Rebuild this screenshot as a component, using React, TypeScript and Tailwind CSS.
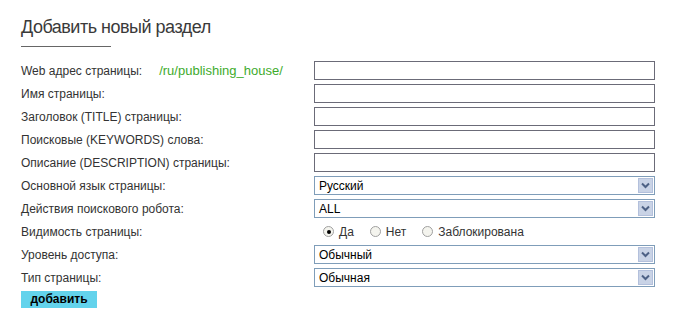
import React from "react";

const font = { fontFamily: '"Liberation Sans", Arial, sans-serif' };

const TextRow = ({ label, extra }: { label: string; extra?: React.ReactNode }) => (
  <div className="flex items-center h-[23px]">
    <div className="w-[293px] flex items-center">
      <span>{label}</span>
      {extra}
    </div>
    <input className="w-[341px] h-[19px] border border-[#6b6b78] bg-white outline-none" />
  </div>
);

const SelectRow = ({ label, value }: { label: string; value: string }) => (
  <div className="flex items-center h-[23px]">
    <div className="w-[293px]">{label}</div>
    <div className="w-[341px] h-[19px] border border-[#7f9db9] bg-white flex items-center justify-between pl-[4px] pr-[1px] text-black">
      <span>{value}</span>
      <span className="w-[15px] h-[15px] bg-[#c9d3e6] border border-[#b3c0dc] flex items-center justify-center">
        <svg width="9" height="7" viewBox="0 0 9 7">
          <path d="M1 1.5 L4.5 5 L8 1.5" stroke="#4d6185" strokeWidth="2" fill="none" />
        </svg>
      </span>
    </div>
  </div>
);

const Radio = ({ label, checked }: { label: string; checked?: boolean }) => (
  <label className="flex items-center gap-[5px] mr-[16px]">
    <span className="w-[11px] h-[11px] rounded-full border border-[#a0a0a0] bg-[#f4f4ee] flex items-center justify-center">
      {checked && <span className="w-[4px] h-[4px] rounded-full bg-black" />}
    </span>
    <span className="text-[#333]">{label}</span>
  </label>
);

export default function App() {
  return (
    <div className="bg-white w-[676px] h-[330px] pl-[21px] pt-[16px] text-[12px] text-[#333]" style={font}>
      <h1 className="text-[18px] leading-[23px] text-[#3a3a3a] tracking-[-0.5px]">Добавить новый раздел</h1>
      <div className="w-[90px] h-px bg-[#666] mt-[7px] mb-[12px]" />
      <div className="flex flex-col">
        <TextRow
          label="Web адрес страницы:"
          extra={<span className="ml-[17px] text-[13px] text-[#3eab2c]">/ru/publishing_house/</span>}
        />
        <TextRow label="Имя страницы:" />
        <TextRow label="Заголовок (TITLE) страницы:" />
        <TextRow label="Поисковые (KEYWORDS) слова:" />
        <TextRow label="Описание (DESCRIPTION) страницы:" />
        <SelectRow label="Основной язык страницы:" value="Русский" />
        <SelectRow label="Действия поискового робота:" value="ALL" />
        <div className="flex items-center h-[23px]">
          <div className="w-[302px]">Видимость страницы:</div>
          <Radio label="Да" checked />
          <Radio label="Нет" />
          <Radio label="Заблокирована" />
        </div>
        <SelectRow label="Уровень доступа:" value="Обычный" />
        <SelectRow label="Тип страницы:" value="Обычная" />
      </div>
      <button className="mt-[2px] w-[76px] h-[17px] bg-[#63d3ec] text-black font-bold text-[12px] leading-[17px]">
        добавить
      </button>
    </div>
  );
}
